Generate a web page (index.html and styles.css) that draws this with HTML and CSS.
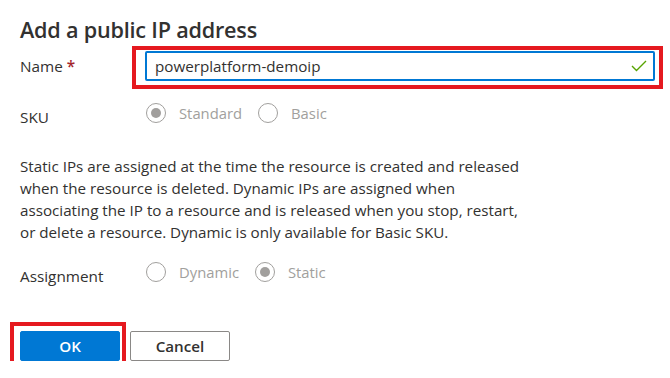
FILE: index.html
```html
<!DOCTYPE html>
<html>
<head>
<meta charset="utf-8">
<link rel="stylesheet" href="styles.css">
</head>
<body>
<div class="panel">
  <h1 class="title">Add a public IP address</h1>
  <div class="row row-name">
    <label class="label">Name <span class="req">*</span></label>
    <div class="field highlight hl-input">
      <div class="input">
        <span class="value">powerplatform-demoip</span>
        <svg class="check" width="16" height="12" viewBox="0 0 16 12"><polyline points="1,6 5.5,10.5 15,1" fill="none" stroke="#57a300" stroke-width="1.4"/></svg>
      </div>
    </div>
  </div>
  <div class="row row-sku">
    <span class="label label-low">SKU</span>
    <div class="radios">
      <span class="radio"><span class="circle on"></span><span class="rtext">Standard</span></span>
      <span class="radio"><span class="circle"></span><span class="rtext">Basic</span></span>
    </div>
  </div>
  <p class="desc">Static IPs are assigned at the time the resource is created and released<br>when the resource is deleted. Dynamic IPs are assigned when<br>associating the IP to a resource and is released when you stop, restart,<br>or delete a resource. Dynamic is only available for Basic SKU.</p>
  <div class="row row-assign">
    <span class="label label-low">Assignment</span>
    <div class="radios">
      <span class="radio"><span class="circle"></span><span class="rtext">Dynamic</span></span>
      <span class="radio"><span class="circle on"></span><span class="rtext">Static</span></span>
    </div>
  </div>
  <div class="actions">
    <span class="highlight hl-ok"><button class="btn btn-primary">OK</button></span>
    <button class="btn btn-default">Cancel</button>
  </div>
</div>
</body>
</html>
```
FILE: styles.css
```css
html, body {
  margin: 0;
  padding: 0;
  background: #ffffff;
}
body {
  font-family: "Open Sans", "Noto Sans", sans-serif;
  color: #323130;
  font-size: 15.2px;
}
.panel {
  padding: 16px 20px 0 20px;
}
.title {
  margin: 0;
  font-size: 21.6px;
  font-weight: 600;
  line-height: 28px;
  letter-spacing: -0.2px;
}
.row {
  display: grid;
  grid-template-columns: 125px 510px;
  align-items: center;
}
.row-name {
  margin-top: 7px;
}
.label {
  font-size: 15.3px;
  line-height: 20px;
}
.label-low {
  position: relative;
  top: 4px;
}
.req {
  color: #a4262c;
  font-weight: 600;
}
.highlight {
  position: relative;
  display: inline-block;
}
.highlight::before {
  content: "";
  position: absolute;
  border: 4px solid #e5191f;
  pointer-events: none;
}
.hl-input::before {
  left: -13px;
  right: -8px;
  top: -5px;
  bottom: -8px;
}
.hl-ok::before {
  left: -10px;
  right: -6px;
  top: -9px;
  bottom: -6px;
}
.input {
  box-sizing: border-box;
  height: 30px;
  border: 2px solid #0078d4;
  border-radius: 2px;
  display: flex;
  align-items: center;
  justify-content: space-between;
  padding: 0 6px 0 8px;
  font-size: 15.2px;
}
.row-sku {
  margin-top: 22px;
}
.radios {
  display: flex;
  align-items: center;
  gap: 15px;
}
.radio {
  display: flex;
  align-items: center;
  gap: 13px;
  color: #a19f9d;
  font-size: 14.8px;
  line-height: 20px;
}
.circle {
  box-sizing: border-box;
  width: 20px;
  height: 20px;
  border-radius: 50%;
  border: 1px solid #a19f9d;
  display: inline-flex;
  align-items: center;
  justify-content: center;
  margin-left: 1px;
}
.circle.on::after {
  content: "";
  width: 10px;
  height: 10px;
  border-radius: 50%;
  background: #a19f9d;
}
.desc {
  margin: 32px 0 0 0;
  font-size: 15.2px;
  line-height: 22px;
}
.row-assign {
  margin-top: 19px;
}
.actions {
  margin-top: 49px;
  display: flex;
  gap: 10px;
}
.btn {
  box-sizing: border-box;
  width: 100px;
  height: 30px;
  border-radius: 2px;
  font-family: "Open Sans", "Noto Sans", sans-serif;
  font-size: 15.2px;
  font-weight: 600;
  padding: 0;
  display: block;
}
.btn-primary {
  background: #0078d4;
  border: 1px solid #0078d4;
  color: #ffffff;
}
.btn-default {
  background: #ffffff;
  border: 1px solid #8a8886;
  color: #323130;
}
```
